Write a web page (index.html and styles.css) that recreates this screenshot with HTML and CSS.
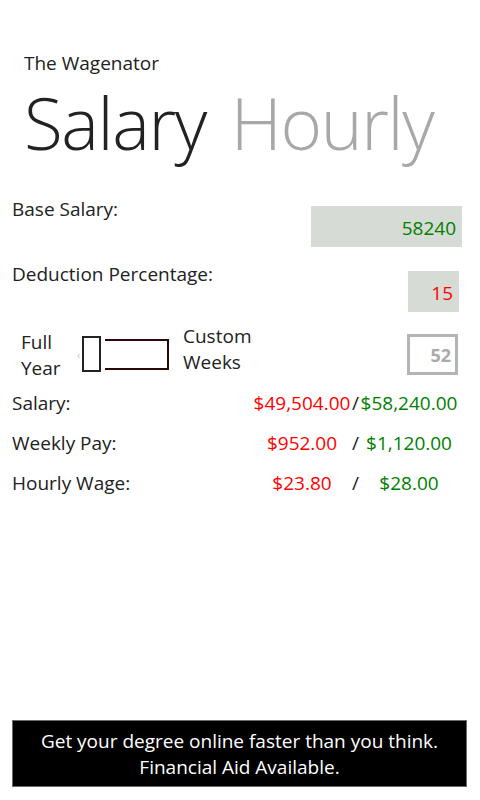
FILE: index.html
```html
<!DOCTYPE html>
<html lang="en">
<head>
<meta charset="utf-8">
<title>The Wagenator</title>
<link rel="stylesheet" href="styles.css">
</head>
<body>
<div class="page">
  <header class="header">
    <div class="app-title">The Wagenator</div>
    <div class="pivot">
      <span class="pivot-item active">Salary</span>
      <span class="pivot-item">Hourly</span>
    </div>
  </header>

  <section class="form">
    <div class="field-row">
      <div class="label">Base Salary:</div>
      <div class="input input-wide green">58240</div>
    </div>
    <div class="field-row">
      <div class="label">Deduction Percentage:</div>
      <div class="input input-small red">15</div>
    </div>
    <div class="toggle-row">
      <div class="toggle-label left">Full<br>Year</div>
      <div class="toggle">
        <span class="toggle-chev">‹</span>
        <span class="toggle-thumb"></span>
        <span class="toggle-track"></span>
      </div>
      <div class="toggle-label right">Custom<br>Weeks</div>
      <div class="weeks-box">52</div>
    </div>
  </section>

  <section class="results">
    <div class="res-label">Salary:</div>
    <div class="res-val red">$49,504.00</div>
    <div class="res-sep">/</div>
    <div class="res-val green">$58,240.00</div>

    <div class="res-label">Weekly Pay:</div>
    <div class="res-val red">$952.00</div>
    <div class="res-sep">/</div>
    <div class="res-val green">$1,120.00</div>

    <div class="res-label">Hourly Wage:</div>
    <div class="res-val red">$23.80</div>
    <div class="res-sep">/</div>
    <div class="res-val green">$28.00</div>
  </section>

  <footer class="ad">
    Get your degree online faster than you think.<br>
    Financial Aid Available.
  </footer>
</div>
</body>
</html>
```

FILE: styles.css
```css
* { box-sizing: border-box; }
html, body {
  margin: 0;
  padding: 0;
  background: #ffffff;
}
body {
  font-family: "Open Sans", "Noto Sans", sans-serif;
  color: #222222;
}
.page {
  width: 480px;
  height: 800px;
  display: flex;
  flex-direction: column;
}
.header {
  padding: 50px 0 0 24px;
}
.app-title {
  font-size: 19px;
  line-height: 26px;
}
.pivot {
  display: flex;
  gap: 25px;
  font-size: 71px;
  font-weight: 300;
  line-height: 90px;
  margin-top: 2px;
  letter-spacing: -1.4px;
}
.pivot-item { color: #a8a8a8; }
.pivot-item.active { color: #222222; }

.form {
  padding: 28px 18px 0 12px;
}
.field-row {
  display: flex;
  justify-content: space-between;
  align-items: flex-start;
  height: 65px;
}
.label {
  font-size: 19px;
  line-height: 26px;
}
.input {
  background: #d6dbd6;
  height: 41px;
  margin-top: 10px;
  font-size: 19px;
  text-align: right;
  padding: 9px 6px 0 0;
  line-height: 26px;
}
.input-wide { width: 151px; }
.input-small { width: 51px; margin-right: 3px; }
.red { color: #ff0000; }
.green { color: #008000; }

.toggle-row {
  display: flex;
  align-items: center;
  height: 56px;
}
.toggle-label {
  font-size: 19px;
  line-height: 26px;
}
.toggle-label.left { margin-left: 9px; width: 56px; padding-top: 2px; }
.toggle-label.right { margin-left: 5px; padding-bottom: 10px; }
.toggle {
  display: flex;
  align-items: center;
  width: 101px;
}
.toggle-chev {
  color: #c8c8c8;
  font-size: 11px;
  width: 5px;
}
.toggle-thumb {
  width: 19px;
  height: 36px;
  border: 2px solid #222222;
}
.toggle-track {
  width: 64px;
  height: 31px;
  margin-left: 4px;
  border: 2px solid #2a0808;
  border-left: none;
}
.weeks-box {
  margin-left: auto;
  margin-right: 4px;
  width: 51px;
  height: 41px;
  border: 3px solid #b4b4b4;
  color: #aaaaaa;
  font-weight: 700;
  font-size: 18px;
  text-align: right;
  padding: 5px 4px 0 0;
  line-height: 26px;
  align-self: flex-start;
  margin-top: 8px;
}

.results {
  display: grid;
  grid-template-columns: 240px 100px 6px 102px;
  grid-auto-rows: 40px;
  padding: 8px 0 0 12px;
  font-size: 19px;
  line-height: 26px;
}
.res-val { text-align: center; }
.res-sep { text-align: center; color: #222222; }

.ad {
  margin: auto 13px 13px 12px;
  height: 67px;
  background: #000000;
  border: 1px solid #6a6a6a;
  color: #ffffff;
  font-size: 19px;
  line-height: 26px;
  text-align: center;
  padding-top: 7px;
}
```
